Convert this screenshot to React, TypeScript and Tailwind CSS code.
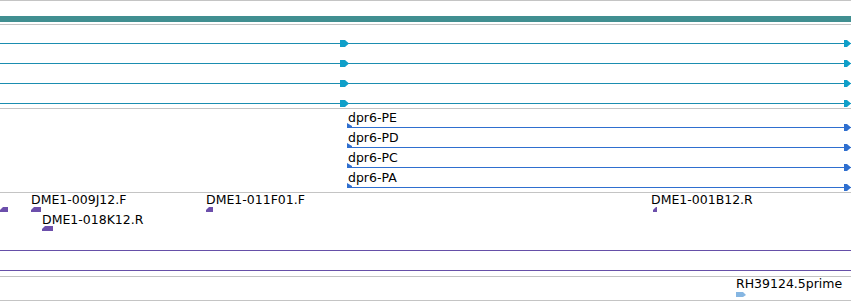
import React from "react";

const font = { fontFamily: '"DejaVu Sans", Verdana, sans-serif' };

function RightHead({ x, w, color }: { x: number; w: number; color: string }) {
  // stepped arrowhead sitting on a 1px line
  return (
    <svg
      className="absolute -top-[3px]"
      style={{ left: x }}
      width={w}
      height={7}
      viewBox={`0 0 ${w} 7`}
    >
      <polygon points={`0,0 ${w - 4},0 ${w},3.5 ${w - 4},7 0,7`} fill={color} />
    </svg>
  );
}

function LeftGlyph({ x, y, w, color }: { x: number; y: number; w: number; color: string }) {
  return (
    <svg className="absolute" style={{ left: x, top: y }} width={w} height={5} viewBox={`0 0 ${w} 5`}>
      <polygon points={`0,3 ${Math.min(3, w - 1)},0 ${w},0 ${w},5 0,5`} fill={color} />
    </svg>
  );
}

function Label({ x, y, children }: { x: number; y: number; children: React.ReactNode }) {
  return (
    <span
      className="absolute text-[12.5px] leading-[14px] text-black whitespace-nowrap"
      style={{ left: x, top: y }}
    >
      {children}
    </span>
  );
}

const transcripts = ["dpr6-PE", "dpr6-PD", "dpr6-PC", "dpr6-PA"];

export default function App() {
  return (
    <div className="w-[851px] h-[301px] bg-white flex flex-col overflow-hidden" style={font}>
      {/* chromosome band */}
      <div className="h-[24px] border-t border-[#c4c4c4] pt-[15px]">
        <div className="h-[6px] bg-[#418f91]" />
      </div>

      {/* gene models */}
      <div className="h-[84px] border-t border-[#c4c4c4] pt-[18px] flex flex-col gap-[19px]">
        {[0, 1, 2, 3].map((i) => (
          <div key={i} className="relative h-px bg-[#1b8db0]">
            <RightHead x={340} w={9} color="#0f9fc9" />
            <RightHead x={844} w={7} color="#0f9fc9" />
          </div>
        ))}
      </div>

      {/* transcripts */}
      <div className="h-[84px] border-t border-[#c4c4c4] pt-[2px] pl-[347px] flex flex-col">
        {transcripts.map((t) => (
          <div key={t} className="h-[20px] flex flex-col">
            <span className="pl-px text-[12.5px] leading-[14px] h-[16px] text-black whitespace-nowrap">{t}</span>
            <div className="relative h-px bg-[#2f6fcf]">
              <svg className="absolute left-0 -top-[4px]" width={5} height={5} viewBox="0 0 5 5">
                <polygon points="0,0 5,3 5,5 0,5" fill="#2f6fcf" />
              </svg>
              <RightHead x={497} w={7} color="#2f6fcf" />
            </div>
          </div>
        ))}
      </div>

      {/* clones */}
      <div className="relative h-[84px] border-t border-[#c4c4c4] pt-[57px] flex flex-col gap-[19px]">
        <Label x={31} y={0}>DME1-009J12.F</Label>
        <Label x={42} y={20}>DME1-018K12.R</Label>
        <Label x={206} y={0}>DME1-011F01.F</Label>
        <Label x={651} y={0}>DME1-001B12.R</Label>
        <LeftGlyph x={0} y={14} w={8} color="#6c4fab" />
        <LeftGlyph x={31} y={14} w={10} color="#6c4fab" />
        <LeftGlyph x={42} y={33} w={11} color="#6c4fab" />
        <LeftGlyph x={206} y={14} w={7} color="#6c4fab" />
        <LeftGlyph x={653} y={14} w={4} color="#6c4fab" />
        <div className="h-px bg-[#6650a8]" />
        <div className="h-px bg-[#6650a8]" />
      </div>

      {/* ESTs */}
      <div className="relative h-[25px] border-t border-b border-[#c4c4c4]">
        <Label x={736} y={0}>RH39124.5prime</Label>
        <svg className="absolute left-[736px] top-[15px]" width={10} height={5} viewBox="0 0 10 5">
          <polygon points="0,0 7,0 10,3 7,5 0,5" fill="#86b6e2" />
        </svg>
      </div>
    </div>
  );
}
